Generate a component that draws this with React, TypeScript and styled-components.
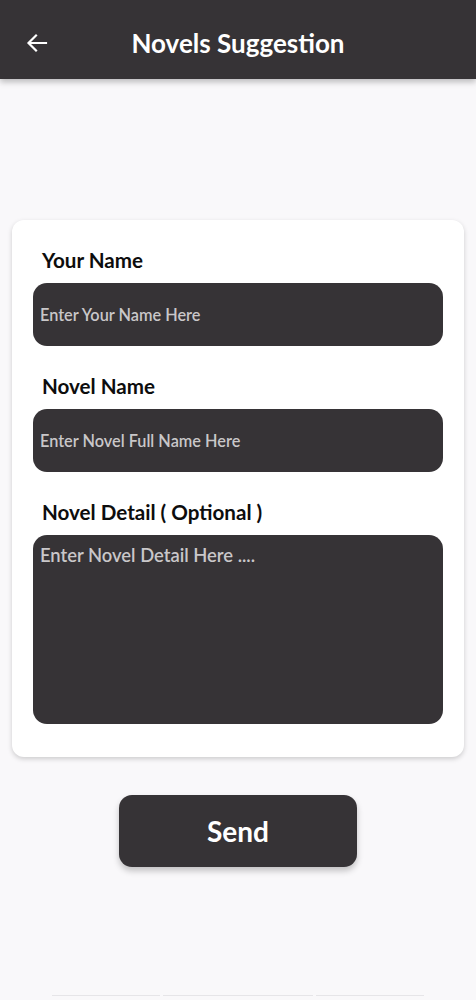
import React from 'react';
import styled, { createGlobalStyle } from 'styled-components';

const GlobalStyle = createGlobalStyle`
    * {
        box-sizing: border-box;
    }
    body {
        margin: 0;
        background: #f9f8fa;
        font-family: Lato, 'Noto Sans', sans-serif;
    }
`;

const dark = '#363336';

const StyledPage = styled.div`
    min-height: 1000px;
    display: flex;
    flex-direction: column;
    background: #f9f8fa;
`;

const StyledHeader = styled.header`
    height: 79px;
    display: flex;
    align-items: center;
    padding-top: 6px;
    background: ${dark};
    box-shadow: 0px 3px 6px rgba(0, 0, 0, 0.25);
`;

const StyledBackButton = styled.button`
    width: 60px;
    height: 60px;
    display: flex;
    align-items: center;
    justify-content: center;
    padding: 0 0 0 14px;
    border: none;
    background: transparent;
    color: #fff;
    cursor: pointer;
`;

const StyledTitle = styled.h1`
    flex: 1;
    margin: 0 60px 0 0;
    text-align: center;
    font-size: 26px;
    font-weight: 700;
    color: #fff;
`;

const StyledMain = styled.main`
    flex: 1;
    display: flex;
    flex-direction: column;
    align-items: center;
    padding: 141px 12px 0;
`;

const StyledCard = styled.form`
    width: 100%;
    display: flex;
    flex-direction: column;
    padding: 28px 21px 33px;
    background: #fff;
    border-radius: 12px;
    box-shadow: 0px 2px 5px rgba(0, 0, 0, 0.18);
`;

const StyledField = styled.div<{ isFirst?: boolean }>`
    display: flex;
    flex-direction: column;
    gap: 11px;
    margin-top: ${(props) => (props.isFirst ? '0' : '28px')};
`;

const StyledLabel = styled.label`
    padding-left: 9px;
    font-size: 20.6px;
    line-height: 24px;
    font-weight: 700;
    color: #0d0d0d;
`;

const StyledInput = styled.input`
    height: 63px;
    width: 100%;
    padding: 0 7px;
    border: none;
    outline: none;
    border-radius: 14px;
    background: ${dark};
    color: #fff;
    font-family: Lato, sans-serif;
    font-size: 16.3px;
    font-weight: 600;

    &::placeholder {
        color: #c9c7c9;
        opacity: 1;
    }
`;

const StyledTextArea = styled.textarea`
    height: 189px;
    width: 100%;
    padding: 9px 7px;
    border: none;
    outline: none;
    resize: none;
    border-radius: 14px;
    background: ${dark};
    color: #fff;
    font-family: Lato, sans-serif;
    font-size: 18.4px;
    font-weight: 600;
    line-height: 1.2;

    &::placeholder {
        color: #c9c7c9;
        opacity: 1;
    }
`;

const StyledSendButton = styled.button`
    width: 238px;
    height: 72px;
    margin-top: 38px;
    border: none;
    border-radius: 13px;
    background: ${dark};
    color: #fff;
    font-family: Lato, sans-serif;
    font-size: 28px;
    font-weight: 700;
    box-shadow: 0px 4px 6px rgba(0, 0, 0, 0.22);
    cursor: pointer;
`;

const StyledFooter = styled.div`
    display: flex;
    justify-content: center;
    gap: 3px;
    padding-bottom: 3px;
`;

const StyledFooterTab = styled.span<{ tabWidth: number }>`
    width: ${(props) => props.tabWidth}px;
    height: 2px;
    border-top: 1px solid #e6e5e8;
`;

function BackArrow() {
    return (
        <svg width="24" height="24" viewBox="0 0 24 24" fill="none">
            <path
                d="M21 12H4M11 4.5 3.5 12l7.5 7.5"
                stroke="#fff"
                strokeWidth="2.2"
                strokeLinecap="square"
            />
        </svg>
    );
}

function App() {
    return (
        <StyledPage>
            <GlobalStyle />
            <StyledHeader>
                <StyledBackButton aria-label="Back">
                    <BackArrow />
                </StyledBackButton>
                <StyledTitle>Novels Suggestion</StyledTitle>
            </StyledHeader>

            <StyledMain>
                <StyledCard onSubmit={(e) => e.preventDefault()}>
                    <StyledField isFirst>
                        <StyledLabel htmlFor="your-name">Your Name</StyledLabel>
                        <StyledInput id="your-name" placeholder="Enter Your Name Here" />
                    </StyledField>
                    <StyledField>
                        <StyledLabel htmlFor="novel-name">Novel Name</StyledLabel>
                        <StyledInput id="novel-name" placeholder="Enter Novel Full Name Here" />
                    </StyledField>
                    <StyledField>
                        <StyledLabel htmlFor="novel-detail">Novel Detail ( Optional )</StyledLabel>
                        <StyledTextArea id="novel-detail" placeholder="Enter Novel Detail Here ...." />
                    </StyledField>
                </StyledCard>
                <StyledSendButton type="button">Send</StyledSendButton>
            </StyledMain>

            <StyledFooter>
                <StyledFooterTab tabWidth={108} />
                <StyledFooterTab tabWidth={150} />
                <StyledFooterTab tabWidth={108} />
            </StyledFooter>
        </StyledPage>
    );
}

export default App;
